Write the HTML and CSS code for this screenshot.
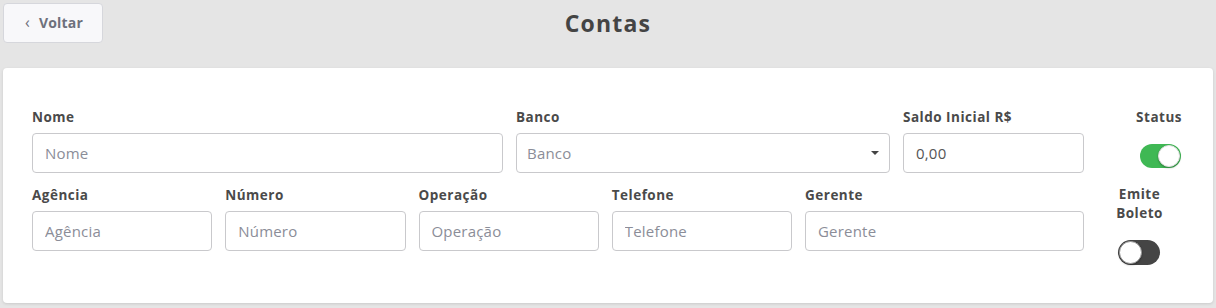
FILE: index.html
```html
<!DOCTYPE html>
<html lang="pt-BR">
<head>
  <meta charset="UTF-8" />
  <title>Contas</title>
  <link rel="stylesheet" href="styles.css">
</head>
<body>

  <!-- Header: back button + page title -->
  <header class="topbar">
    <button class="back-btn" type="button">
      <span class="chevron">&#8249;</span> Voltar
    </button>
    <h1 class="title">Contas</h1>
    <div></div>
  </header>

  <!-- Form card -->
  <main class="card">
    <div class="row row-one">
      <div class="field">
        <label>Nome</label>
        <input class="input" type="text" placeholder="Nome" />
      </div>
      <div class="field">
        <label>Banco</label>
        <div class="select">
          <span class="select-text">Banco</span>
          <span class="caret"></span>
        </div>
      </div>
      <div class="field">
        <label>Saldo Inicial R$</label>
        <input class="input" type="text" value="0,00" />
      </div>
      <div class="field switch-field right">
        <label>Status</label>
        <span class="switch on"><span class="knob"></span></span>
      </div>
    </div>

    <div class="row row-two">
      <div class="field">
        <label>Agência</label>
        <input class="input" type="text" placeholder="Agência" />
      </div>
      <div class="field">
        <label>Número</label>
        <input class="input" type="text" placeholder="Número" />
      </div>
      <div class="field">
        <label>Operação</label>
        <input class="input" type="text" placeholder="Operação" />
      </div>
      <div class="field">
        <label>Telefone</label>
        <input class="input" type="text" placeholder="Telefone" />
      </div>
      <div class="field">
        <label>Gerente</label>
        <input class="input" type="text" placeholder="Gerente" />
      </div>
      <div class="field switch-field center">
        <label>Emite<br>Boleto</label>
        <span class="switch off"><span class="knob"></span></span>
      </div>
    </div>
  </main>

</body>
</html>
```

FILE: styles.css
```css
/* ----- Base ----- */
* {
  box-sizing: border-box;
}

html, body {
  margin: 0;
  background: #e5e5e5;
  font-family: "Open Sans", "Liberation Sans", sans-serif;
  color: #4a4a4a;
}

body {
  padding: 3px;
}

/* ----- Header ----- */
.topbar {
  display: grid;
  grid-template-columns: 1fr auto 1fr;
  align-items: center;
  height: 40px;
}

.back-btn {
  justify-self: start;
  width: 100px;
  height: 40px;
  display: flex;
  align-items: center;
  justify-content: center;
  gap: 9px;
  background: #f8f8fa;
  border: 1px solid #d6d7dc;
  border-radius: 4px;
  font-family: inherit;
  font-size: 14px;
  font-weight: 700;
  letter-spacing: 0.2px;
  color: #6e717c;
  padding: 0 0 1px 2px;
}
.back-btn .chevron {
  font-size: 16px;
  font-weight: 400;
  margin-top: -2px;
}

.title {
  margin: 0;
  font-size: 23px;
  font-weight: 700;
  letter-spacing: 1.2px;
  color: #444;
  padding-bottom: 1px;
}

/* ----- Card ----- */
.card {
  margin-top: 25px;
  background: #fff;
  border-radius: 4px;
  box-shadow: 0 1px 3px rgba(0, 0, 0, 0.12);
  padding: 41px 31px 38px 29px;
  display: flex;
  flex-direction: column;
  gap: 14px;
}

.row {
  display: grid;
  gap: 13px;
}
.row-one {
  grid-template-columns: 471px 374px 181px 1fr;
}
.row-two {
  grid-template-columns: repeat(4, minmax(0, 1fr)) 279px 85px;
}

.field {
  display: flex;
  flex-direction: column;
  min-width: 0;
}
.field label {
  font-size: 13.5px;
  font-weight: 700;
  letter-spacing: 0.5px;
  line-height: 17px;
  margin-bottom: 7px;
  color: #4a4a4a;
}

.input,
.select {
  width: 100%;
  min-width: 0;
  height: 40px;
  border: 1px solid #c9c9cc;
  border-radius: 4px;
  padding: 0 12px;
  font-family: inherit;
  font-size: 15px;
  letter-spacing: 0.2px;
  color: #555;
  background: #fff;
}
.input::placeholder {
  color: #8b8d98;
}

.select {
  display: flex;
  align-items: center;
  justify-content: space-between;
  padding: 0 10px;
}
.select-text {
  color: #8b8d98;
}
.caret {
  width: 0;
  height: 0;
  border-left: 4px solid transparent;
  border-right: 4px solid transparent;
  border-top: 4px solid #444;
}

/* ----- Toggle switches ----- */
.switch-field.right {
  align-items: flex-end;
}
.switch-field.center {
  align-items: center;
}
.switch-field.center label {
  text-align: center;
  line-height: 19px;
  margin-bottom: 17px;
  margin-top: -2px;
}

.switch {
  width: 42px;
  height: 25px;
  border-radius: 13px;
  display: flex;
  align-items: center;
  padding: 2px;
}
.switch.on {
  width: 41px;
  height: 24px;
  padding: 1px;
  background: #3fb854;
  justify-content: flex-end;
  margin-top: 11px;
  margin-right: 1px;
}
.switch.off {
  background: #454545;
  justify-content: flex-start;
  margin-right: 2px;
}
.knob {
  width: 22px;
  height: 22px;
  border-radius: 50%;
  background: #fff;
  border: 1px solid #e0e0e0;
  box-shadow: 0 1px 2px rgba(0, 0, 0, 0.3);
}
.switch.off .knob {
  width: 23px;
  height: 23px;
  margin-left: -1px;
  border: 1px solid #999;
}
```
